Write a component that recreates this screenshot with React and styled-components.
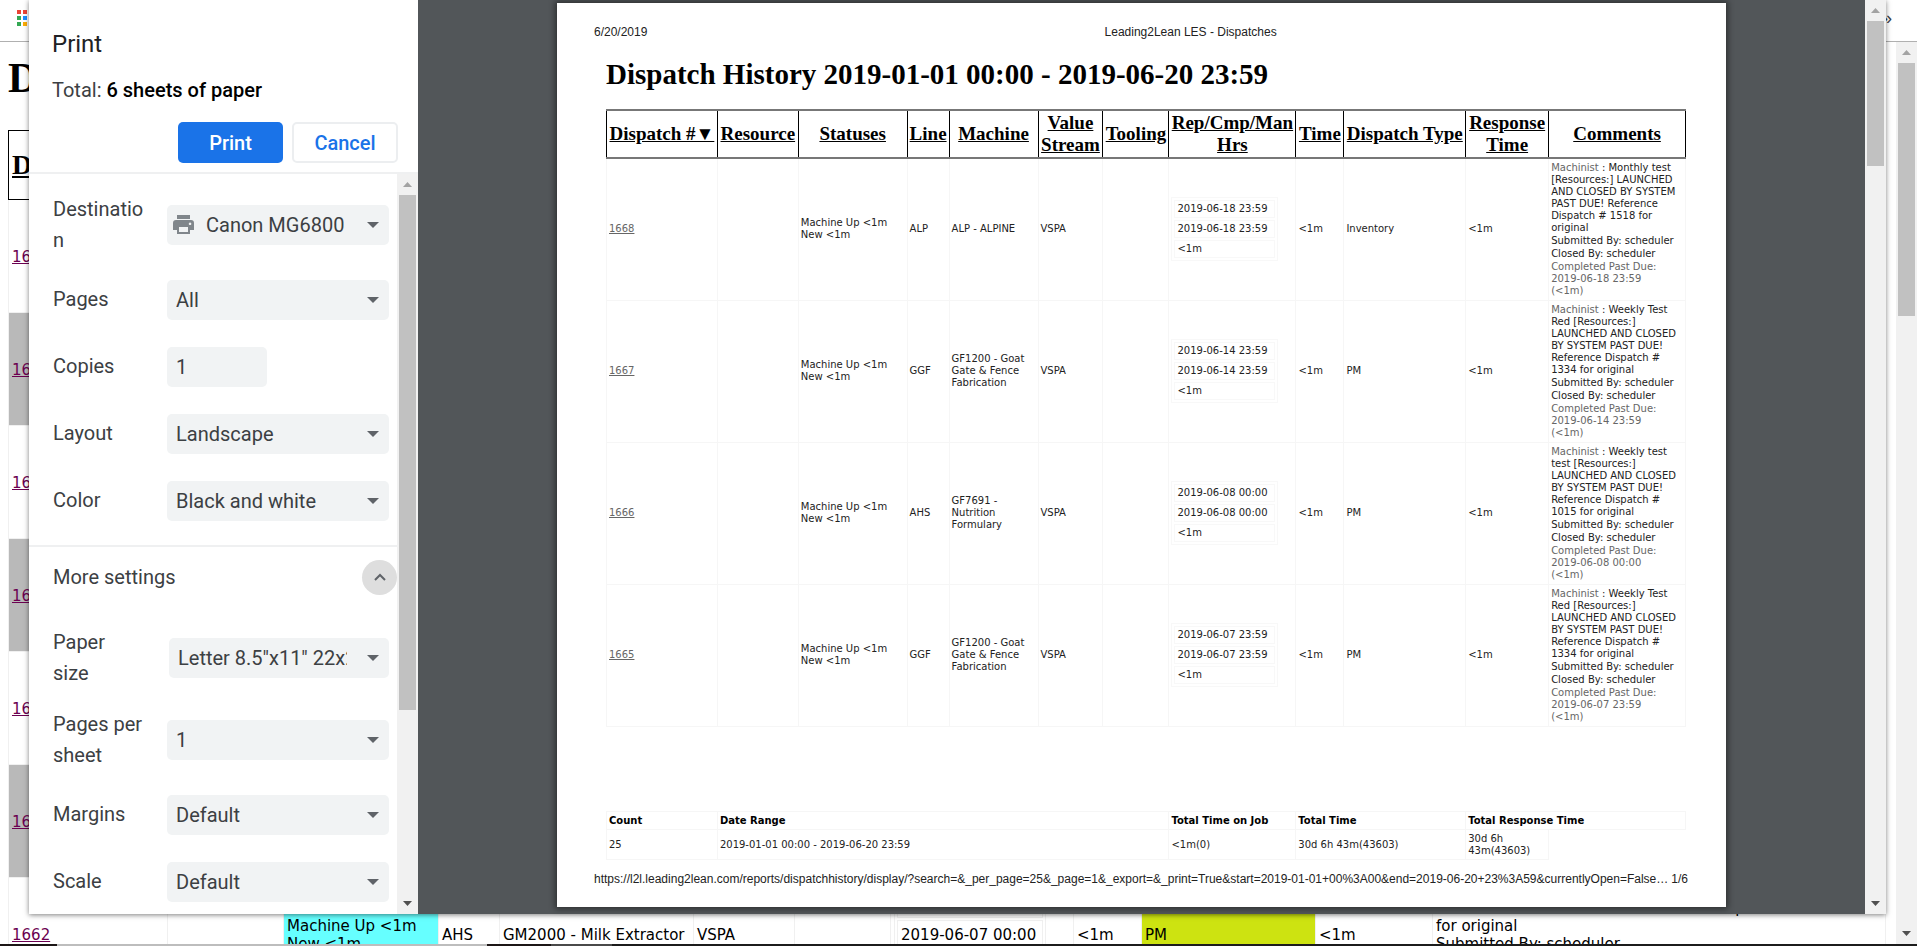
import React from 'react'
import styled, { createGlobalStyle } from 'styled-components'

const serif = '"Liberation Serif", "Times New Roman", serif'
const sans = '"Liberation Sans", Arial, sans-serif'
const verdana = '"DejaVu Sans", Verdana, sans-serif'
const roboto = 'Roboto, "Liberation Sans", sans-serif'

const REPORT_TITLE = 'Dispatch History 2019-01-01 00:00 - 2019-06-20 23:59'

const columns = [
    { label: 'Dispatch #▼', width: 111 },
    { label: 'Resource', width: 81 },
    { label: 'Statuses', width: 109 },
    { label: 'Line', width: 42 },
    { label: 'Machine', width: 89 },
    { label: 'Value Stream', width: 65 },
    { label: 'Tooling', width: 66 },
    { label: 'Rep/Cmp/Man Hrs', width: 127 },
    { label: 'Time', width: 48 },
    { label: 'Dispatch Type', width: 122 },
    { label: 'Response Time', width: 83 },
    { label: 'Comments', width: 137 },
]

const dispatches = [
    { id: 1668, line: 'ALP', machine: 'ALP - ALPINE', date: '2019-06-18 23:59', type: 'Inventory', note: 'Monthly test', ref: 1518 },
    { id: 1667, line: 'GGF', machine: 'GF1200 - Goat Gate & Fence Fabrication', date: '2019-06-14 23:59', type: 'PM', note: 'Weekly Test Red', ref: 1334 },
    { id: 1666, line: 'AHS', machine: 'GF7691 - Nutrition Formulary', date: '2019-06-08 00:00', type: 'PM', note: 'Weekly test test', ref: 1015 },
    { id: 1665, line: 'GGF', machine: 'GF1200 - Goat Gate & Fence Fabrication', date: '2019-06-07 23:59', type: 'PM', note: 'Weekly Test Red', ref: 1334 },
]

const summaryWidths = [111, 452, 127, 170, 83, 137]

const pageColumns = [159, 116, 155, 61, 194, 101, 96, 183, 68, 174, 117, 453]
const hiddenRows = [1668, 1667, 1666, 1665, 1664, 1663]

function Scrollbar ({ thumb, rest }) {
    return (
        <Track>
            <ScrollArrow viewBox="0 0 21 21"><path d="M10.5 8l4.5 5h-9z" fill="#a3a3a3"/></ScrollArrow>
            <Thumb $size={thumb}/>
            <Space $size={rest}/>
            <ScrollArrow viewBox="0 0 21 21"><path d="M10.5 13l4.5-5h-9z" fill="#505050"/></ScrollArrow>
        </Track>
    )
}

function SelectRow ({ id, label, value, icon, narrow }) {
    return (
        <SettingRow>
            <Label htmlFor={id} $narrow={narrow}>{label}</Label>
            <SelectBox>
                <Select id={id} defaultValue={value} $icon={!!icon}>
                    <option>{value}</option>
                </Select>
                {icon}
                <Arrow viewBox="0 0 12 6"><path d="M0 0h12L6 6z" fill="#5f6368"/></Arrow>
            </SelectBox>
        </SettingRow>
    )
}

function PrintSettings () {
    return (
        <Sidebar>
            <SidebarHeader>
                <SidebarTitle>Print</SidebarTitle>
                <Total>Total: <strong>6 sheets of paper</strong></Total>
                <Actions>
                    <Button $primary>Print</Button>
                    <Button>Cancel</Button>
                </Actions>
            </SidebarHeader>
            <SidebarBody>
                <Settings>
                    <Group>
                        <SelectRow
                            id="destination"
                            label="Destination"
                            value="Canon MG6800"
                            icon={
                                <PrinterIcon viewBox="0 0 22 20">
                                    <path d="M4 0h13v4H4z M3 5h15a3 3 0 0 1 3 3v7h-4v4H4v-4H0V8a3 3 0 0 1 3-3z M6 12v5h9v-5z M17 7.500a1.300 1.300 0 1 0 .1 0z" fill="#80868b" fillRule="evenodd"/>
                                </PrinterIcon>
                            }
                        />
                        <SelectRow id="pages" label="Pages" value="All"/>
                        <SettingRow>
                            <Label htmlFor="copies">Copies</Label>
                            <CopiesInput id="copies" type="text" defaultValue="1"/>
                        </SettingRow>
                        <SelectRow id="layout" label="Layout" value="Landscape"/>
                        <SelectRow id="color" label="Color" value="Black and white"/>
                    </Group>
                    <MoreSettings>
                        <span>More settings</span>
                        <ExpandButton aria-label="Collapse more settings">
                            <svg width="14" height="10" viewBox="0 0 14 10"><path d="M2 8l5-5 5 5" fill="none" stroke="#5f6368" strokeWidth="2"/></svg>
                        </ExpandButton>
                    </MoreSettings>
                    <SelectRow id="paper" label="Paper size" value={'Letter 8.5"x11" 22x28cm'} narrow/>
                    <SelectRow id="perSheet" label="Pages per sheet" value="1"/>
                    <SelectRow id="margins" label="Margins" value="Default"/>
                    <SelectRow id="scale" label="Scale" value="Default"/>
                </Settings>
                <Scrollbar thumb={515} rest={183}/>
            </SidebarBody>
        </Sidebar>
    )
}

function DispatchRow ({ dispatch }) {
    const { id, line, machine, date, type, note, ref } = dispatch

    return (
        <tr>
            <Cell><ReportLink href="#">{id}</ReportLink></Cell>
            <Cell/>
            <Cell>Machine Up &lt;1m<br/>New &lt;1m</Cell>
            <Cell>{line}</Cell>
            <Cell>{machine}</Cell>
            <Cell>VSPA</Cell>
            <Cell/>
            <Cell>
                <TimeBox>
                    <TimeEntry>{date}</TimeEntry>
                    <TimeEntry>{date}</TimeEntry>
                    <TimeEntry>&lt;1m</TimeEntry>
                </TimeBox>
            </Cell>
            <Cell>&lt;1m</Cell>
            <Cell>{type}</Cell>
            <Cell>&lt;1m</Cell>
            <Cell>
                <Comment>
                    <div><Muted>Machinist</Muted> : {note} [Resources:] LAUNCHED AND CLOSED BY SYSTEM PAST DUE! Reference Dispatch # {ref} for original</div>
                    <div>Submitted By: scheduler</div>
                    <div>Closed By: scheduler</div>
                    <Muted>Completed Past Due: {date}<br/>(&lt;1m)</Muted>
                </Comment>
            </Cell>
        </tr>
    )
}

function Preview () {
    return (
        <PreviewPane>
            <PaperArea>
                <Paper>
                    <PageHeader>
                        <span>6/20/2019</span>
                        <span>Leading2Lean LES - Dispatches</span>
                    </PageHeader>
                    <ReportTitle>{REPORT_TITLE}</ReportTitle>
                    <ReportTable>
                        <colgroup>
                            {columns.map(({ label, width }) => <Col key={label} $width={width}/>)}
                        </colgroup>
                        <thead>
                            <tr>
                                {columns.map(({ label }) => (
                                    <HeadCell key={label}><a href="#">{label}</a></HeadCell>
                                ))}
                            </tr>
                        </thead>
                        <tbody>
                            {dispatches.map(dispatch => <DispatchRow key={dispatch.id} dispatch={dispatch}/>)}
                        </tbody>
                    </ReportTable>
                    <SummaryTable>
                        <colgroup>
                            {summaryWidths.map((width, i) => <Col key={i} $width={width}/>)}
                        </colgroup>
                        <tbody>
                            <tr>
                                <SummaryHead>Count</SummaryHead>
                                <SummaryHead>Date Range</SummaryHead>
                                <SummaryHead>Total Time on Job</SummaryHead>
                                <SummaryHead>Total Time</SummaryHead>
                                <SummaryHead colSpan={2}>Total Response Time</SummaryHead>
                            </tr>
                            <tr>
                                <SummaryCell>25</SummaryCell>
                                <SummaryCell>2019-01-01 00:00 - 2019-06-20 23:59</SummaryCell>
                                <SummaryCell>&lt;1m(0)</SummaryCell>
                                <SummaryCell>30d 6h 43m(43603)</SummaryCell>
                                <SummaryCell>30d 6h 43m(43603)</SummaryCell>
                            </tr>
                        </tbody>
                    </SummaryTable>
                    <PageFooter>
                        <span>https://l2l.leading2lean.com/reports/dispatchhistory/display/?search=&amp;_per_page=25&amp;_page=1&amp;_export=&amp;_print=True&amp;start=2019-01-01+00%3A00&amp;end=2019-06-20+23%3A59&amp;currentlyOpen=False…</span>
                        <span>1/6</span>
                    </PageFooter>
                </Paper>
            </PaperArea>
            <Scrollbar thumb={145} rest={729}/>
        </PreviewPane>
    )
}

function ReportPage () {
    return (
        <Browser>
            <BookmarksBar>
                <svg width="16" height="16" viewBox="0 0 16 16">
                    <path d="M0 0h4v4H0z M6 0h4v4H6z M12 0h4v4h-4z" fill="#ea4335"/>
                    <path d="M0 6h4v4H0z M12 6h4v4h-4z" fill="#34a853"/>
                    <path d="M6 6h4v4H6z" fill="#1a8cff"/>
                    <path d="M0 12h4v4H0z" fill="#34a853"/>
                    <path d="M6 12h4v4H6z M12 12h4v4h-4z" fill="#fbab05"/>
                </svg>
                <span>»</span>
            </BookmarksBar>
            <BrowserBody>
                <Document>
                    <PageTitle>Dispatch History</PageTitle>
                    <PageTable>
                        <colgroup>
                            {pageColumns.map((width, i) => <Col key={i} $width={i === pageColumns.length - 1 ? null : width}/>)}
                        </colgroup>
                        <thead>
                            <tr><PageHeadCell colSpan={12}>Dispatch #</PageHeadCell></tr>
                        </thead>
                        <tbody>
                            {hiddenRows.map((id, i) => (
                                <PageRow key={id} $shaded={i % 2 === 1}>
                                    <td colSpan={12}><a href="#">{id}</a></td>
                                </PageRow>
                            ))}
                            <PageRow>
                                <td><a href="#">1662</a></td>
                                <td/>
                                <PageCell $fill="#66ffff">Machine Up &lt;1m<br/>New &lt;1m</PageCell>
                                <td>AHS</td>
                                <td>GM2000 - Milk Extractor</td>
                                <td>VSPA</td>
                                <td/>
                                <td>
                                    <PageTimeBox>
                                        <PageTime>2019-06-07 00:00</PageTime>
                                        <PageTime>2019-06-07 00:00</PageTime>
                                        <PageTime>&lt;1m</PageTime>
                                    </PageTimeBox>
                                </td>
                                <td>&lt;1m</td>
                                <PageCell $fill="#cde311">PM</PageCell>
                                <td>&lt;1m</td>
                                <td>
                                    Machinist : Weekly Test [Resources:] LAUNCHED<br/>
                                    AND CLOSED BY SYSTEM PAST DUE! Dispatch # 1334<br/>
                                    for original<br/>
                                    Submitted By: scheduler<br/>
                                    Closed By: scheduler<br/>
                                    Completed Past Due
                                </td>
                            </PageRow>
                        </tbody>
                    </PageTable>
                </Document>
                <Scrollbar thumb={253} rest={608}/>
            </BrowserBody>
            <BottomEdge/>
        </Browser>
    )
}

function App () {
    return (
        <Screen>
            <GlobalStyle/>
            <ReportPage/>
            <Dialog role="dialog" aria-label="Print">
                <PrintSettings/>
                <Preview/>
            </Dialog>
        </Screen>
    )
}

const GlobalStyle = createGlobalStyle`
    *, *::before, *::after {
        box-sizing: border-box;
    }

    body {
        margin: 0;
        background: #fff;
    }
`

const Screen = styled.div`
    position: relative;
    height: 100vh;
    overflow: hidden;
`

const Track = styled.div`
    display: flex;
    flex-direction: column;
    flex: none;
    width: 21px;
    background: #f1f1f1;
`

const ScrollArrow = styled.svg`
    flex: none;
    width: 21px;
    height: 21px;
`

const Thumb = styled.div`
    flex: ${props => props.$size} 0 0;
    margin: 0 2px;
    background: #c1c1c1;
`

const Space = styled.div`
    flex: ${props => props.$size} 0 0;
`

const Col = styled.col`
    width: ${props => props.$width ? `${props.$width}px` : 'auto'};
`

/* browser window behind the dialog */

const Browser = styled.div`
    display: flex;
    flex-direction: column;
    height: 100%;
`

const BookmarksBar = styled.div`
    display: flex;
    flex: none;
    align-items: flex-start;
    justify-content: space-between;
    height: 42px;
    padding: 10px 25px 0 17px;
    border-bottom: 1px solid #b0b0b0;
    color: #3c4043;
    font: 18px/16px ${sans};
`

const BrowserBody = styled.div`
    display: flex;
    flex: 1;
    min-height: 0;
`

const Document = styled.div`
    flex: 1;
    min-width: 0;
    padding: 0 10px 0 8px;
    overflow: hidden;
`

const PageTitle = styled.h1`
    margin: 12px 0 28px;
    font: bold 42px/48px ${serif};
`

const PageTable = styled.table`
    width: 100%;
    table-layout: fixed;
    border-collapse: collapse;
    font: 15px/18px ${verdana};

    td {
        padding: 2px 3px 0;
        border: 1px solid #f0f0f0;
    }

    a {
        color: #6b0050;
    }
`

const PageHeadCell = styled.th`
    height: 69px;
    padding: 0 3px;
    border: 1px solid #000;
    text-align: left;
    text-decoration: underline;
    font: bold 28px/32px ${serif};
`

const PageRow = styled.tr`
    height: 113px;
    background: ${props => props.$shaded ? '#b9b9b9' : 'transparent'};
`

const PageCell = styled.td`
    background: ${props => props.$fill};
`

const PageTimeBox = styled.div`
    display: flex;
    flex-direction: column;
    gap: 2px;
    width: 152px;
    padding: 2px;
    border: 1px solid #f0f0f0;
`

const PageTime = styled.div`
    padding: 5px 3px;
    border: 1px solid #f0f0f0;
`

const BottomEdge = styled.div`
    flex: none;
    height: 2px;
    background: linear-gradient(to right, #1c1616 57px, #bdbdbd 57px 487px, #1c1616 487px 551px, #4a4a4a 551px 612px, #1c1c1c 612px);
`

/* print dialog */

const Dialog = styled.div`
    position: absolute;
    top: 0;
    right: 31px;
    bottom: 32px;
    left: 29px;
    display: flex;
    background: #fff;
    box-shadow: 0 1px 5px rgba(0,0,0,0.50);
`

const Sidebar = styled.div`
    display: flex;
    flex-direction: column;
    flex: none;
    width: 389px;
    color: #3c4043;
    font: 20px/31px ${roboto};
`

const SidebarHeader = styled.div`
    flex: none;
    padding: 28px 20px 9px 23px;
    border-bottom: 2px solid #eff0f1;
`

const SidebarTitle = styled.h2`
    margin: 0 0 15px;
    color: #202124;
    font-size: 24px;
    font-weight: 400;
    line-height: 32px;
`

const Total = styled.div`
    margin-bottom: 16px;

    strong {
        color: #000;
        font-weight: 500;
    }
`

const Actions = styled.div`
    display: flex;
    justify-content: flex-end;
    gap: 9px;
`

const Button = styled.button`
    width: ${props => props.$primary ? '105px' : '106px'};
    height: 41px;
    border: ${props => props.$primary ? '0' : '2px solid #eceef0'};
    border-radius: 5px;
    background: ${props => props.$primary ? '#1a73e8' : '#fff'};
    color: ${props => props.$primary ? '#fff' : '#1a73e8'};
    font: 500 20px/24px ${roboto};
`

const SidebarBody = styled.div`
    display: flex;
    flex: 1;
    min-height: 0;
`

const Settings = styled.div`
    flex: 1;
    min-width: 0;
    padding-top: 10px;
    overflow: hidden;
`

const Group = styled.div`
    padding-bottom: 11px;
    border-bottom: 2px solid #eff0f1;
`

const SettingRow = styled.div`
    display: flex;
    align-items: center;
    min-height: 67px;
    padding: 10px 8px 10px 24px;
`

const Label = styled.label`
    flex: none;
    width: ${props => props.$narrow ? '80px' : '94px'};
    margin-right: ${props => props.$narrow ? '36px' : '20px'};
    overflow-wrap: break-word;
`

const SelectBox = styled.div`
    display: grid;
    flex: 1;
    min-width: 0;
    align-items: center;

    > * {
        grid-area: 1 / 1;
    }
`

const Select = styled.select`
    width: 100%;
    height: 40px;
    padding: 0 42px 0 ${props => props.$icon ? '39px' : '9px'};
    border: 0;
    border-radius: 5px;
    appearance: none;
    background: #f1f3f4;
    color: #3c4043;
    font: 20px/24px ${roboto};
`

const PrinterIcon = styled.svg`
    width: 22px;
    height: 20px;
    margin-left: 6px;
    pointer-events: none;
`

const Arrow = styled.svg`
    justify-self: end;
    width: 12px;
    height: 6px;
    margin-right: 10px;
    pointer-events: none;
`

const CopiesInput = styled.input`
    width: 100px;
    height: 40px;
    padding: 0 9px;
    border: 0;
    border-radius: 5px;
    background: #f1f3f4;
    color: #3c4043;
    font: 20px/24px ${roboto};
`

const MoreSettings = styled.div`
    display: flex;
    align-items: center;
    justify-content: space-between;
    height: 70px;
    padding: 0 0 10px 24px;
`

const ExpandButton = styled.button`
    display: flex;
    align-items: center;
    justify-content: center;
    width: 35px;
    height: 35px;
    padding: 0;
    border: 0;
    border-radius: 50%;
    background: #dedede;
`

/* preview */

const PreviewPane = styled.div`
    display: flex;
    flex: 1;
    min-width: 0;
    background: #525659;
`

const PaperArea = styled.div`
    display: flex;
    flex: 1;
    min-width: 0;
    padding: 3px 139px 7px;
`

const Paper = styled.div`
    display: flex;
    flex-direction: column;
    flex: 1;
    min-width: 0;
    padding: 21px 38px 20px 37px;
    background: #fff;
    box-shadow: 0 0 6px 2px rgba(0,0,0,0.45);
`

const PageHeader = styled.div`
    display: grid;
    grid-template-columns: 7fr 8fr;
    color: #222;
    font: 12px/16px ${sans};
`

const ReportTitle = styled.h1`
    margin: 17px 0 18px 12px;
    font: bold 29px/34px ${serif};
`

const ReportTable = styled.table`
    margin: 0 2px 0 12px;
    table-layout: fixed;
    border-collapse: collapse;
    color: #222;
    font: 10px/12px ${verdana};
`

const HeadCell = styled.th`
    height: 48px;
    padding: 0;
    border: 1px solid #000;
    border-top: 2px solid #777;
    border-bottom: 2px solid #777;
    font: bold 19px/22px ${serif};

    a {
        color: #000;
    }
`

const Cell = styled.td`
    height: 142px;
    padding: 0 2px;
    border: 1px solid #f6f6f6;
`

const ReportLink = styled.a`
    color: #666;
`

const TimeBox = styled.div`
    display: flex;
    flex-direction: column;
    gap: 2px;
    width: 107px;
    padding: 2px;
    border: 1px solid #f8f8f8;
`

const TimeEntry = styled.div`
    padding: 2px;
    border: 1px solid #f8f8f8;
`

const Comment = styled.div`
    display: flex;
    flex-direction: column;
    gap: 1px;
`

const Muted = styled.span`
    color: #666;
`

const SummaryTable = styled.table`
    margin: auto 2px 11px 12px;
    table-layout: fixed;
    border-collapse: collapse;
    color: #222;
    font: 10px/12px ${verdana};
`

const SummaryHead = styled.th`
    height: 18px;
    padding: 0 2px;
    border: 1px solid #f6f6f6;
    color: #000;
    text-align: left;
`

const SummaryCell = styled.td`
    height: 30px;
    padding: 0 2px;
    border: 1px solid #f6f6f6;
`

const PageFooter = styled.div`
    display: flex;
    justify-content: space-between;
    color: #222;
    font: 12px/16px ${sans};
`

export default App
